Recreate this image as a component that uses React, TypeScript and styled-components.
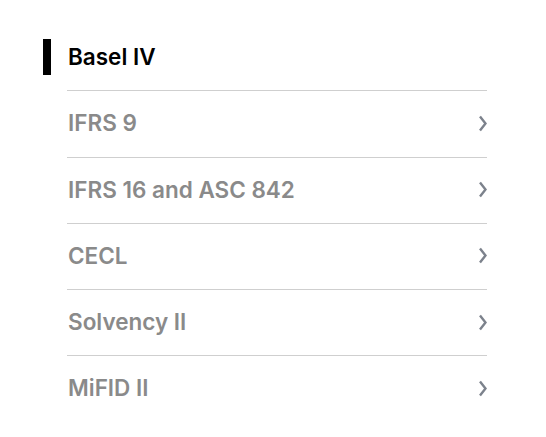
import React from "react";
import styled, { createGlobalStyle } from "styled-components";

const GlobalStyle = createGlobalStyle`
    body {
        margin: 0;
        background: #fff;
        font-family: Inter, "Noto Sans", sans-serif;
    }
`;

const Nav = styled.ul`
    list-style: none;
    margin: 0;
    padding: 25px 0 0 67px;
    width: 420px;
`;

const Item = styled.li<{ $active?: boolean }>`
    position: relative;
    display: flex;
    align-items: center;
    justify-content: space-between;
    height: 65.25px;
    border-bottom: 1px solid #cfcfcf;
    &:last-child {
        border-bottom: none;
    }
    &::before {
        content: "";
        display: ${(p) => (p.$active ? "block" : "none")};
        position: absolute;
        left: -24px;
        top: 14px;
        width: 8px;
        height: 36px;
        background: #000;
    }
`;

const Label = styled.span<{ $active?: boolean }>`
    padding-left: 1px;
    margin-top: -2px;
    font-size: 22.5px;
    font-weight: 600;
    color: ${(p) => (p.$active ? "#000" : "#8a8a8a")};
`;

const Chevron = styled.svg`
    width: 10px;
    height: 17px;
    margin-top: -1px;
`;

const ChevronIcon = () => (
    <Chevron viewBox="0 0 10 17">
        <path d="M3 1.5 L8.5 8.5 L3 15.5" fill="none" stroke="#7c828c" strokeWidth="2.4" />
    </Chevron>
);

const items = ["Basel IV", "IFRS 9", "IFRS 16 and ASC 842", "CECL", "Solvency II", "MiFID II"];

export default function App() {
    return (
        <>
            <GlobalStyle />
            <Nav>
                {items.map((name, i) => (
                    <Item key={name} $active={i === 0}>
                        <Label $active={i === 0}>{name}</Label>
                        {i !== 0 && <ChevronIcon />}
                    </Item>
                ))}
            </Nav>
        </>
    );
}
